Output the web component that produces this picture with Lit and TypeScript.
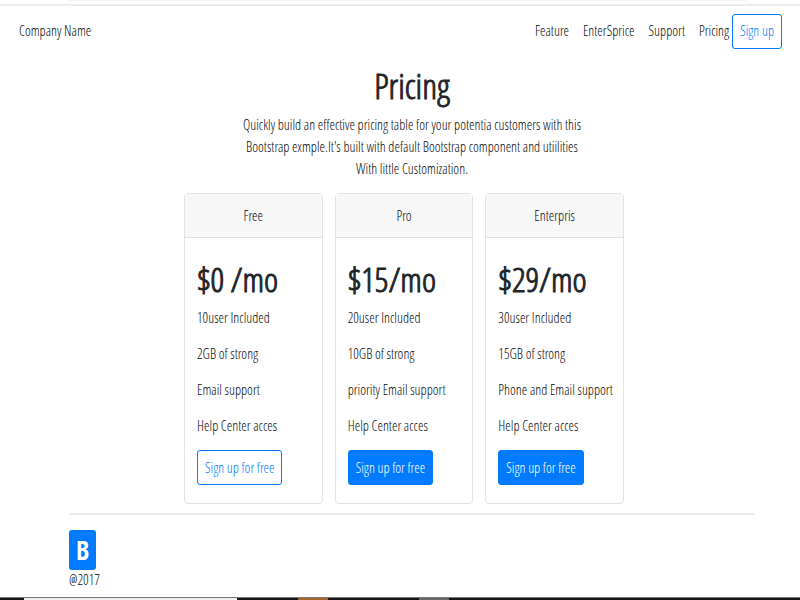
import { LitElement, html, css } from "lit";
import { customElement } from "lit/decorators.js";
import { classMap } from "lit/directives/class-map.js";

interface Plan {
  name: string;
  price: string;
  features: string[];
  outline: boolean;
}

const PLANS: Plan[] = [
  { name: "Free", price: "$0 /mo", features: ["10user Included", "2GB of strong", "Email support", "Help Center acces"], outline: true },
  { name: "Pro", price: "$15/mo", features: ["20user Included", "10GB of strong", "priority Email support", "Help Center acces"], outline: false },
  { name: "Enterpris", price: "$29/mo", features: ["30user Included", "15GB of strong", "Phone and Email support", "Help Center acces"], outline: false },
];

@customElement("app-root")
export class AppRoot extends LitElement {
  static styles = css`
    :host {
      display: flex;
      flex-direction: column;
      min-height: 100vh;
      box-sizing: border-box;
      background: #fff;
      color: #080a0c;
      font: 14px/22px "Open Sans Condensed Light", "Roboto Condensed", "Open Sans", sans-serif;
    }
    * { box-sizing: border-box; }
    h1, h2, p, ul { margin: 0; padding: 0; font-weight: inherit; }
    a { color: inherit; text-decoration: none; }
    .browser-edge { height: 6px; border-bottom: 2px solid #ebebeb; }
    .browser-edge::before {
      content: "";
      display: block;
      height: 1px;
      margin: 0 54px 0 67px;
      background: #f1f1f1;
    }
    .top {
      display: flex;
      align-items: center;
      justify-content: space-between;
      height: 50px;
      padding: 0 18px 0 19px;
    }
    nav { display: flex; align-items: center; }
    .link { margin-right: 14px; }
    .link:last-of-type { margin-right: 3px; }
    .btn {
      height: 35px;
      padding: 0 7px;
      border: 1px solid #007bff;
      border-radius: 3px;
      background: #007bff;
      color: #fff;
      font: inherit;
      white-space: nowrap;
    }
    .outline { background: #fff; color: #007bff; }
    main { display: flex; flex-direction: column; margin: 0 45px 0 69px; }
    .intro { text-align: center; }
    .title,
    .price {
      color: #212529;
      -webkit-text-stroke: 1px currentColor;
    }
    .title { font-size: 35px; padding-top: 2px; line-height: 56px; }
    .plans {
      display: grid;
      grid-template-columns: repeat(3, minmax(0, 1fr));
      gap: 12px;
      margin: 13px 131px 9px 115px;
    }
    .card { border: 1px solid #e2e2e2; border-radius: 4px; padding-bottom: 18px; }
    .name {
      padding: 11px 0 10px;
      text-align: center;
      background: #f7f7f7;
      border-bottom: 1px solid #dfdfdf;
    }
    .body { padding: 19px 12px 0; }
    .price { font-size: 34px; line-height: 44px; white-space: nowrap; }
    .features { list-style: none; white-space: nowrap; padding-top: 6px; }
    .features li { margin-bottom: 14px; }
    .features li:last-child { margin-bottom: 13px; }
    footer { border-top: 2px solid #ebebeb; padding-top: 15px; }
    .logo {
      display: block;
      width: 27px;
      border-radius: 3px;
      background: #007bff;
      color: #fff;
      text-align: center;
      font: 700 26px/40px "Open Sans Condensed", "Roboto Condensed", sans-serif;
    }
    .copy { line-height: 20px; }
    .taskbar {
      display: grid;
      grid-template-columns: 3% 26.6% 7.7% 3.7% 11.4% 3.7% 1fr;
      height: 3px;
      margin-top: auto;
      border-top: 1px solid #777;
      background: #17161a;
    }
    .window { grid-column: 2; background: #f2f2f2; }
    .folder { grid-column: 4; background: #a8652b; }
    .app { grid-column: 6; background: #666; }
  `;

  render() {
    return html`
      <div class="browser-edge"></div>
      <header class="top">
        <a class="brand" href="#">Company Name</a>
        <nav>
          ${["Feature", "EnterSprice", "Support", "Pricing"].map(
            (t) => html`<a class="link" href="#">${t}</a>`
          )}
          <button class="btn outline">Sign up</button>
        </nav>
      </header>
      <main>
        <section class="intro">
          <h1 class="title">Pricing</h1>
          <p>
            Quickly build an effective pricing table for your potentia customers with this<br />
            Bootstrap exmple.It's built with default Bootstrap component and utiilities<br />
            With little Customization.
          </p>
        </section>
        <section class="plans">
          ${PLANS.map(
            (p) => html`
              <article class="card">
                <p class="name">${p.name}</p>
                <div class="body">
                  <h2 class="price">${p.price}</h2>
                  <ul class="features">
                    ${p.features.map((f) => html`<li>${f}</li>`)}
                  </ul>
                  <button class=${classMap({ btn: true, outline: p.outline })}>Sign up for free</button>
                </div>
              </article>
            `
          )}
        </section>
        <footer>
          <span class="logo">B</span>
          <p class="copy">@2017</p>
        </footer>
      </main>
      <div class="taskbar">
        <span class="window"></span><span class="folder"></span><span class="app"></span>
      </div>
    `;
  }
}
